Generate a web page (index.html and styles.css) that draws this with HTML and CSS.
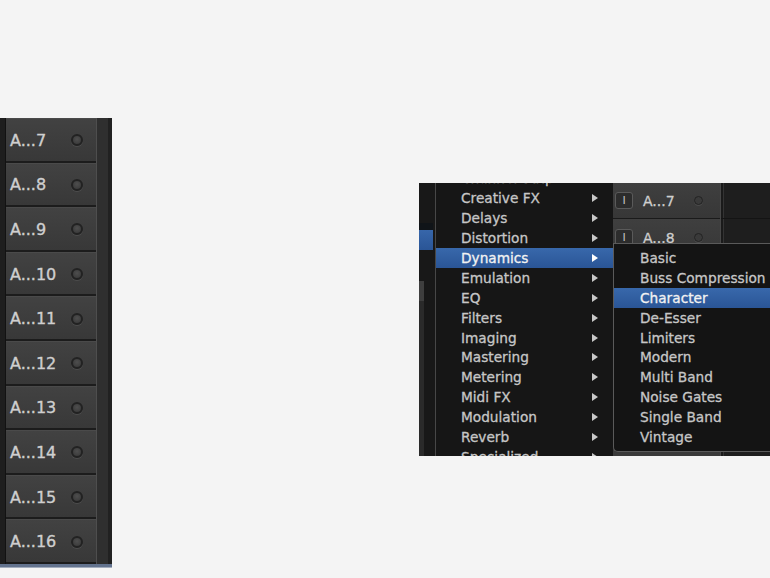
FILE: index.html
```html
<!DOCTYPE html>
<html>
<head>
<meta charset="utf-8">
<link rel="stylesheet" href="styles.css">
</head>
<body>
<div class="page">
  <section class="tracks">
    <div class="edge"></div>
    <div class="rows">
      <div class="row"><span class="name">A...7</span><span class="dot"></span></div>
      <div class="row"><span class="name">A...8</span><span class="dot"></span></div>
      <div class="row"><span class="name">A...9</span><span class="dot"></span></div>
      <div class="row"><span class="name">A...10</span><span class="dot"></span></div>
      <div class="row"><span class="name">A...11</span><span class="dot"></span></div>
      <div class="row"><span class="name">A...12</span><span class="dot"></span></div>
      <div class="row"><span class="name">A...13</span><span class="dot"></span></div>
      <div class="row"><span class="name">A...14</span><span class="dot"></span></div>
      <div class="row"><span class="name">A...15</span><span class="dot"></span></div>
      <div class="row"><span class="name">A...16</span><span class="dot"></span></div>
    </div>
    <div class="side"></div>
  </section>

  <section class="shot">
    <div class="shot-grid">
      <div class="lane">
        <div class="lane-gap"></div>
        <div class="lane-sel"></div>
        <div class="lane-gap2"></div>
        <div class="lane-block"></div>
        <div class="lane-strip"></div>
      </div>
      <div class="under"></div>
      <div class="heads">
        <div class="head h1"><span class="btn">I</span><span class="hname">A...7</span><span class="hdot"></span></div>
        <div class="head h2"><span class="btn">I</span><span class="hname">A...8</span><span class="hdot"></span></div>
      </div>
      <div class="arrange">
        <div class="arr-row"></div>
      </div>
    </div>

    <ul class="menu">
      <li class="item">Channel Strip<span class="arr"></span></li>
      <li class="item">Creative FX<span class="arr"></span></li>
      <li class="item">Delays<span class="arr"></span></li>
      <li class="item">Distortion<span class="arr"></span></li>
      <li class="item sel">Dynamics<span class="arr"></span></li>
      <li class="item">Emulation<span class="arr"></span></li>
      <li class="item">EQ<span class="arr"></span></li>
      <li class="item">Filters<span class="arr"></span></li>
      <li class="item">Imaging<span class="arr"></span></li>
      <li class="item">Mastering<span class="arr"></span></li>
      <li class="item">Metering<span class="arr"></span></li>
      <li class="item">Midi FX<span class="arr"></span></li>
      <li class="item">Modulation<span class="arr"></span></li>
      <li class="item">Reverb<span class="arr"></span></li>
      <li class="item">Specialized<span class="arr"></span></li>
    </ul>

    <ul class="submenu">
      <li class="sitem">Basic</li>
      <li class="sitem">Buss Compression</li>
      <li class="sitem sel">Character</li>
      <li class="sitem">De-Esser</li>
      <li class="sitem">Limiters</li>
      <li class="sitem">Modern</li>
      <li class="sitem">Multi Band</li>
      <li class="sitem">Noise Gates</li>
      <li class="sitem">Single Band</li>
      <li class="sitem">Vintage</li>
    </ul>
  </section>
</div>
</body>
</html>
```

FILE: styles.css
```css
html, body {
  margin: 0;
  padding: 0;
  background: #f4f4f4;
}

.page {
  width: 770px;
  height: 578px;
  overflow: hidden;
  display: flex;
  align-items: flex-start;
  font-family: "DejaVu Sans", "Liberation Sans", sans-serif;
}

/* ---------- left track column ---------- */
.tracks {
  margin-top: 118px;
  width: 112px;
  height: 446px;
  display: flex;
  border-bottom: 3px solid #63738e;
  box-shadow: 0 1px 0 #a3adbd;
  flex-shrink: 0;
}

.edge {
  width: 5px;
  background: #1e1e1e;
  border-right: 1px solid #121212;
}

.rows {
  width: 90px;
  display: flex;
  flex-direction: column;
}

.row {
  height: 44.6px;
  box-sizing: border-box;
  border-bottom: 2px solid #1c1c1c;
  background: linear-gradient(#424242, #383838);
  box-shadow: inset 0 1px 0 #4a4a4a;
  display: flex;
  align-items: center;
  padding-left: 4px;
  padding-top: 2px;
}

.name {
  font-size: 16px;
  color: #cfcfcf;
  white-space: nowrap;
  -webkit-text-stroke: 0.35px #cfcfcf;
}

.dot {
  margin-left: auto;
  margin-right: 13px;
  width: 8px;
  height: 8px;
  border-radius: 50%;
  background: radial-gradient(circle at 50% 40%, #4e4e4e, #363636);
  border: 2px solid #222;
  box-shadow: 0 1px 0 #4c4c4c;
}

.side {
  width: 16px;
  box-sizing: border-box;
  border-left: 1px solid #4e4e4e;
  background: linear-gradient(to right, #2f2f2f 0 11px, #212121 11px);
}

/* ---------- right screenshot ---------- */
.shot {
  margin-left: 307px;
  margin-top: 183px;
  width: 351px;
  height: 273px;
  position: relative;
  overflow: hidden;
  background: #1a1a1a;
  flex-shrink: 0;
}

.shot-grid {
  display: grid;
  grid-template-columns: 16px 178px 107px 1fr;
  height: 100%;
}

.lane {
  display: flex;
  flex-direction: column;
  background: #181818;
}

.lane-gap { height: 40px; }

.lane-sel {
  height: 20px;
  width: 14px;
  border-top: 7px solid #101418;
  background: linear-gradient(#3766aa, #2a5596);
}

.lane-gap2 { height: 31px; }

.lane-block {
  height: 20px;
  width: 5px;
  background: #3e3e3e;
}

.lane-strip {
  flex: 1;
  width: 5px;
  background: #2a2a2a;
}

.under { background: #161616; }

.heads {
  background: #3a3a3a;
  display: flex;
  flex-direction: column;
}

.head {
  display: flex;
  align-items: center;
  box-sizing: border-box;
  padding-left: 2px;
  border-bottom: 1px solid #1a1a1a;
  background: linear-gradient(#3f3f3f, #373737);
}

.h1 { height: 36px; }
.h2 { height: 38px; }

.btn {
  width: 18px;
  height: 17px;
  box-sizing: border-box;
  border: 1px solid #5a5a5a;
  border-radius: 3px;
  background: #2c2c2c;
  color: #c4c4c4;
  font-size: 11px;
  line-height: 15px;
  text-align: center;
  margin-right: 10px;
}

.hname {
  font-size: 14px;
  color: #cfcfcf;
  -webkit-text-stroke: 0.3px #cfcfcf;
}

.hdot {
  margin-left: auto;
  margin-right: 17px;
  width: 7px;
  height: 7px;
  border-radius: 50%;
  background: #3a3a3a;
  border: 1px solid #222;
  box-shadow: 0 1px 0 #4a4a4a;
}

.arrange {
  box-sizing: border-box;
  border-left: 1px solid #474747;
  background: linear-gradient(to right, #1a1a1a 0 2px, #333 2px 3px, #1e1e1e 3px);
}

.arr-row {
  height: 35px;
  border-bottom: 1px solid #141414;
}

/* ---------- menus ---------- */
.menu, .submenu {
  list-style: none;
  margin: 0;
  padding: 0;
  position: absolute;
  box-sizing: border-box;
  font-size: 13.7px;
  color: #c6c6c6;
  -webkit-text-stroke: 0.3px #c6c6c6;
}

.menu {
  left: 16px;
  top: -14.5px;
  width: 178px;
  background: #161616;
  border-left: 1px solid #474747;
}

.item {
  height: 19.9px;
  display: flex;
  align-items: center;
  justify-content: space-between;
  padding: 0 15px 0 25px;
  white-space: nowrap;
}

.arr {
  width: 0;
  height: 0;
  border-left: 6px solid #c8c8c8;
  border-top: 4px solid transparent;
  border-bottom: 4px solid transparent;
}

.sel {
  background: linear-gradient(#3868ab, #2a5596);
  color: #f2f2f2;
  -webkit-text-stroke: 0.3px #f2f2f2;
}

.sel .arr { border-left-color: #fff; }

.submenu {
  left: 194px;
  top: 60px;
  width: 200px;
  height: 209px;
  padding-top: 4px;
  background: #141414;
  border: 1px solid #5a5a5a;
  border-right: none;
  border-bottom-left-radius: 5px;
}

.sitem {
  height: 19.9px;
  display: flex;
  align-items: center;
  padding-left: 26px;
  white-space: nowrap;
}
```
